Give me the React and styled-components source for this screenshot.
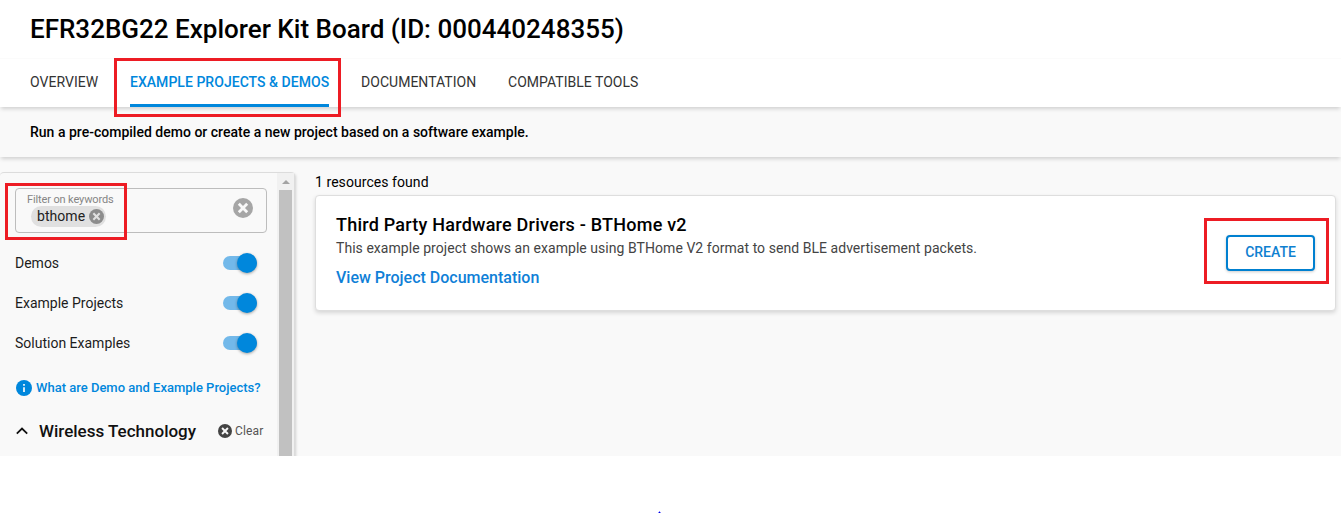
import React from "react";
import styled, { createGlobalStyle } from "styled-components";

const Global = createGlobalStyle`
  * { box-sizing: border-box; }
  body { margin: 0; background: #fff; font-family: Roboto, "Liberation Sans", sans-serif; color: #000; }
`;

const Page = styled.div`
  position: relative;
  height: 513px;
  overflow: hidden;
`;
const Launcher = styled.div`
  height: 456px;
  overflow: hidden;
  display: flex;
  flex-direction: column;
  background: #f9f9f9;
`;
const Header = styled.header`
  height: 59px;
  flex: none;
  padding-left: 30px;
  background: #fff;
  border-bottom: 1px solid #fbfbfb;
`;
const Text = styled.span`
  display: block;
  margin: 0;
  white-space: nowrap;
  font-size: ${(p) => p.$size}px;
  line-height: ${(p) => p.$line || 20}px;
  font-weight: ${(p) => p.$weight || 400};
  letter-spacing: ${(p) => p.$track || 0}px;
  color: ${(p) => p.$color || "#000"};
`;
const Tabs = styled.nav`
  height: 48px;
  flex: none;
  display: flex;
  gap: 32px;
  padding-left: 30px;
  background: #fff;
  position: relative;
  z-index: 2;
  box-shadow: 0 3px 4px -1px rgba(0, 0, 0, 0.16);
`;
const Tab = styled.div`
  width: ${(p) => p.$width}px;
  height: 48px;
  padding-top: 13px;
  border-bottom: 3px solid ${(p) => (p.$active ? "#0087dc" : "transparent")};
`;
const Banner = styled.div`
  height: 50px;
  flex: none;
  padding: 15px 30px;
  background: #f9f9f9;
  position: relative;
  z-index: 1;
  box-shadow: 0 3px 4px -1px rgba(0, 0, 0, 0.16);
`;
const Body = styled.div`
  flex: 1;
  min-height: 0;
  padding-top: 15px;
  display: flex;
`;
const Sidebar = styled.aside`
  width: 295px;
  height: 320px;
  flex: none;
  display: flex;
  border: 1px solid #dcdcdc;
  border-left: 0;
  border-radius: 4px;
  box-shadow: 2px 1px 3px -1px rgba(0, 0, 0, 0.16);
`;
const Filters = styled.div`
  width: 277px;
  padding: 15px 10px 0 15px;
`;
const Scrollbar = styled.div`
  width: 17px;
  background: #f1f1f1;
  display: flex;
  flex-direction: column;
  align-items: center;
`;
const ArrowUp = styled.div`
  margin: 7px 0 6px;
  border: 4px solid transparent;
  border-top: 0;
  border-bottom: 4px solid #a3a3a3;
`;
const Thumb = styled.div`
  width: 13px;
  flex: 1;
  background: #c1c1c1;
`;
const Field = styled.div`
  width: 252px;
  height: 45px;
  padding: 3px 13px 0 11px;
  display: flex;
  justify-content: space-between;
  border: 1px solid #bdbdbd;
  border-radius: 4px;
`;
const FieldLabel = styled.div`
  height: 14px;
  padding-top: 1px;
`;
const Chip = styled.div`
  width: 75px;
  height: 21px;
  margin: 0 0 0 4px;
  padding: 0 2px 1px 6px;
  display: flex;
  align-items: center;
  justify-content: space-between;
  border-radius: 11px;
  background: #e0e0e0;
`;
const ClearSlot = styled.div`
  padding-top: 6px;
`;
const Toggles = styled.div`
  padding-top: 10px;
`;
const ToggleRow = styled.div`
  width: 242px;
  height: 40px;
  display: flex;
  align-items: center;
  justify-content: space-between;
`;
const Track = styled.div`
  width: 34px;
  height: 14px;
  display: flex;
  align-items: center;
  justify-content: flex-end;
  border-radius: 7px;
  background: #73b9ea;
`;
const Knob = styled.div`
  width: 20px;
  height: 20px;
  flex: none;
  border-radius: 50%;
  background: #0087dc;
  box-shadow: 0 1px 3px rgba(0, 0, 0, 0.35);
`;
const HelpLink = styled.div`
  height: 20px;
  margin-top: 15px;
  padding-left: 0.5px;
  display: flex;
  align-items: center;
  gap: 4.5px;
`;
const Section = styled.div`
  height: 24px;
  margin-top: 21px;
  padding-left: 1px;
  display: flex;
  align-items: center;
`;
const SectionName = styled.div`
  width: 179px;
  margin-left: 11px;
`;
const ClearAction = styled.div`
  display: flex;
  align-items: center;
  gap: 3px;
`;
const Results = styled.main`
  flex: 1;
  padding: 0 5px 0 20px;
`;
const Card = styled.section`
  height: 116px;
  margin-top: 3px;
  padding: 0 20px;
  display: flex;
  justify-content: space-between;
  background: #fff;
  border: 1px solid #dedede;
  border-radius: 4px;
  box-shadow: 0 2px 4px rgba(0, 0, 0, 0.14);
`;
const CardText = styled.div`
  padding-top: 17px;
`;
const CardLink = styled.div`
  margin-top: 9px;
`;
const CreateButton = styled.button`
  width: 89px;
  height: 36px;
  margin-top: 39px;
  padding: 0 0 2px;
  display: flex;
  align-items: center;
  justify-content: center;
  background: #fff;
  border: 2px solid #0080d0;
  border-radius: 4px;
  box-shadow: 0 1px 3px rgba(0, 0, 0, 0.2);
  font-family: inherit;
`;
const Highlight = styled.div`
  position: absolute;
  z-index: 5;
  left: ${(p) => p.$x}px;
  top: ${(p) => p.$y}px;
  width: ${(p) => p.$w}px;
  height: ${(p) => p.$h}px;
  border: 3px solid #ed1c24;
`;
const Footer = styled.footer`
  height: 57px;
  display: flex;
  align-items: flex-end;
  padding-left: 658px;
`;
const Icon = styled.svg`
  display: block;
  flex: none;
`;

const CrossCircle = ({ size, color, cross = "#f9f9f9" }) => (
  <Icon width={size} height={size} viewBox="2 2 20 20">
    <circle cx="12" cy="12" r="10" fill={color} />
    <path d="M7.8 7.8l8.4 8.4M16.2 7.8l-8.4 8.4" stroke={cross} strokeWidth="2.8" />
  </Icon>
);
const InfoIcon = () => (
  <Icon width="16" height="16" viewBox="0 0 16 16">
    <circle cx="8" cy="8" r="8" fill="#0087dc" />
    <path d="M8 4v1.7M8 7.2V12" stroke="#f9f9f9" strokeWidth="1.7" />
  </Icon>
);
const Chevron = () => (
  <Icon width="12" height="8" viewBox="0 0 12 8">
    <path d="M.8 6.7L6 1.6l5.2 5.1" fill="none" stroke="#111" strokeWidth="1.8" />
  </Icon>
);

const TABS = [
  { label: "OVERVIEW", width: 68 },
  { label: "EXAMPLE PROJECTS & DEMOS", width: 199, active: true },
  { label: "DOCUMENTATION", width: 115 },
  { label: "COMPATIBLE TOOLS", width: 131 },
];

export default function App() {
  return (
    <Page>
      <Global />
      <Launcher>
        <Header>
          <Text as="h1" $size={26} $line={58} $weight={500}>
            EFR32BG22 Explorer Kit Board (ID: 000440248355)
          </Text>
        </Header>
        <Tabs>
          {TABS.map((t) => (
            <Tab key={t.label} $width={t.width} $active={t.active}>
              <Text $size={14} $track={0.03} $weight={t.active ? 500 : 400} $color={t.active ? "#0087dc" : "#333"}>
                {t.label}
              </Text>
            </Tab>
          ))}
        </Tabs>
        <Banner>
          <Text $size={14} $track={0.01} $weight={500}>
            Run a pre-compiled demo or create a new project based on a software example.
          </Text>
        </Banner>
        <Body>
          <Sidebar>
            <Filters>
              <Field>
                <div>
                  <FieldLabel>
                    <Text $size={11} $line={14} $track={-0.13} $color="#858585">Filter on keywords</Text>
                  </FieldLabel>
                  <Chip>
                    <Text $size={14} $color="#222" $track={0.05}>bthome</Text>
                    <CrossCircle size={15} color="#8c8c8c" cross="#e0e0e0" />
                  </Chip>
                </div>
                <ClearSlot>
                  <CrossCircle size={20} color="#a6a6a6" />
                </ClearSlot>
              </Field>
              <Toggles>
                {["Demos", "Example Projects", "Solution Examples"].map((name) => (
                  <ToggleRow key={name}>
                    <Text $size={14} $color="#1c1c1c">{name}</Text>
                    <Track>
                      <Knob />
                    </Track>
                  </ToggleRow>
                ))}
              </Toggles>
              <HelpLink>
                <InfoIcon />
                <Text $size={13} $weight={500} $color="#0087dc">What are Demo and Example Projects?</Text>
              </HelpLink>
              <Section>
                <Chevron />
                <SectionName>
                  <Text $size={17} $weight={500} $color="#111">Wireless Technology</Text>
                </SectionName>
                <ClearAction>
                  <CrossCircle size={14} color="#444" />
                  <Text $size={12} $track={0.15} $color="#555">Clear</Text>
                </ClearAction>
              </Section>
            </Filters>
            <Scrollbar>
              <ArrowUp />
              <Thumb />
            </Scrollbar>
          </Sidebar>
          <Results>
            <Text $size={14} $track={0.06}>1 resources found</Text>
            <Card>
              <CardText>
                <Text $size={18} $line={24} $weight={500} $track={0.23}>Third Party Hardware Drivers - BTHome v2</Text>
                <Text $size={14} $line={22} $track={0.046} $color="#444">
                  This example project shows an example using BTHome V2 format to send BLE advertisement packets.
                </Text>
                <CardLink>
                  <Text $size={16} $weight={500} $color="#0f80d7">View Project Documentation</Text>
                </CardLink>
              </CardText>
              <CreateButton>
                <Text $size={14} $weight={500} $color="#0f80d0">CREATE</Text>
              </CreateButton>
            </Card>
          </Results>
        </Body>
      </Launcher>
      <Footer>
        <svg width="3" height="2" viewBox="0 0 3 2">
          <path d="M1 0h1v1H1zM0 1h3v1H0z" fill="#8c8cff" />
          <path d="M1 1h1v1H1z" fill="#0000e0" />
        </svg>
      </Footer>
      <Highlight $x={114} $y={58} $w={227} $h={59} />
      <Highlight $x={5} $y={183} $w={122} $h={57} />
      <Highlight $x={1204} $y={218} $w={125} $h={66} />
    </Page>
  );
}
